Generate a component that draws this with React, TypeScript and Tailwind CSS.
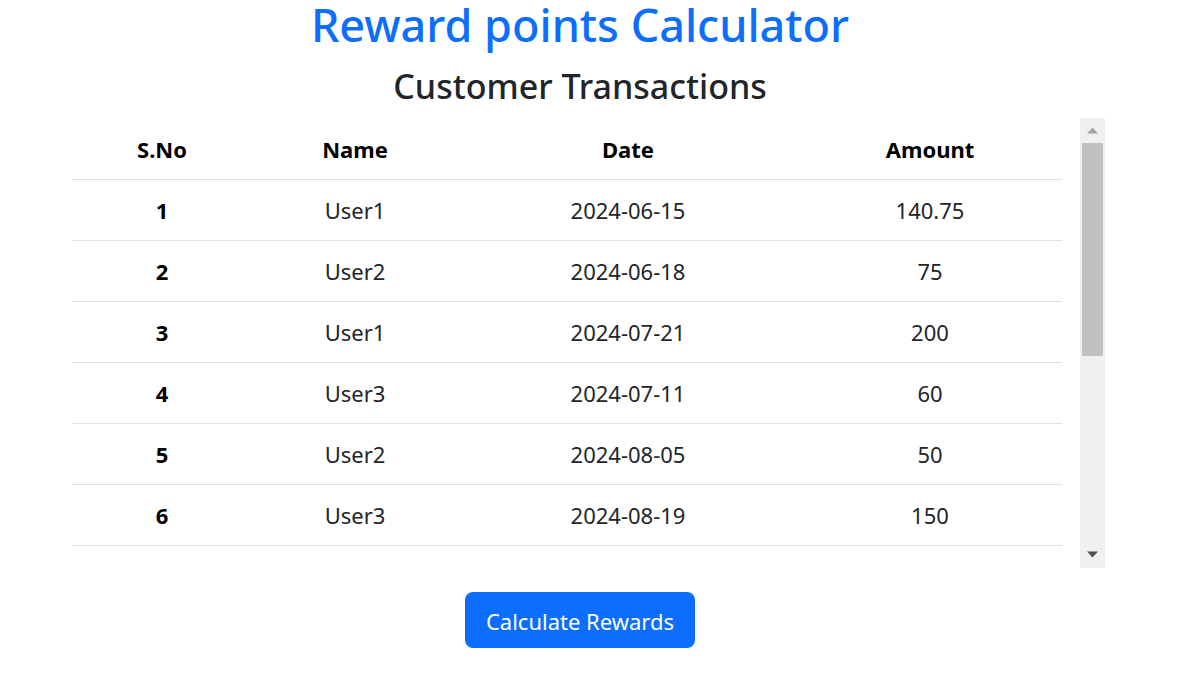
const transactions = [
  { id: 1, name: 'User1', date: '2024-06-15', amount: '140.75' },
  { id: 2, name: 'User2', date: '2024-06-18', amount: '75' },
  { id: 3, name: 'User1', date: '2024-07-21', amount: '200' },
  { id: 4, name: 'User3', date: '2024-07-11', amount: '60' },
  { id: 5, name: 'User2', date: '2024-08-05', amount: '50' },
  { id: 6, name: 'User3', date: '2024-08-19', amount: '150' },
  { id: 7, name: 'User1', date: '2024-08-25', amount: '95' },
  { id: 8, name: 'User2', date: '2024-09-02', amount: '120' },
];

const ScrollBar = () => (
  <div className="w-[25px] h-[450px] bg-[#f0f0f0] flex flex-col shrink-0">
    <div className="h-[25px] flex items-center justify-center">
      <svg width="11" height="7" viewBox="0 0 11 7">
        <polygon points="5.5,0.5 11,6.5 0,6.5" fill="#a3a3a3" />
      </svg>
    </div>
    <div className="px-[2px]">
      <div className="h-[213px] bg-[#c1c1c1]" />
    </div>
    <div className="flex-1" />
    <div className="h-[25px] flex items-center justify-center pb-[2px]">
      <svg width="11" height="7" viewBox="0 0 11 7">
        <polygon points="0,0.5 11,0.5 5.5,6.5" fill="#505050" />
      </svg>
    </div>
  </div>
);

export default function App() {
  return (
    <div className="w-[1182px] h-[689px] bg-white font-['Noto_Sans',sans-serif] text-[#212529]">
      <div className="w-[1160px] flex flex-col items-center">
        <h1 className="text-[45px] leading-[50px] font-medium text-[#0d6efd]">Reward points Calculator</h1>
        <h2 className="mt-[16px] text-[34px] leading-[40px] font-medium">Customer Transactions</h2>
      </div>

      {/* transactions list */}
      <div className="mt-[12px] pl-[72px] flex gap-[18px]">
        <div className="w-[990px] h-[450px] overflow-hidden">
          <table className="w-full border-collapse text-[22px] leading-[30px] text-center">
            <thead>
              <tr className="h-[61px] border-b border-[#dee2e6]">
                <th className="w-[180px] pt-[1px] font-bold text-black">S.No</th>
                <th className="w-[206px] pt-[1px] font-bold text-black">Name</th>
                <th className="w-[340px] pt-[1px] font-bold text-black">Date</th>
                <th className="w-[264px] pt-[1px] font-bold text-black">Amount</th>
              </tr>
            </thead>
            <tbody>
              {transactions.map(t => (
                <tr key={t.id} className="h-[61px] border-b border-[#dee2e6]">
                  <td className="pt-[1px] font-bold text-black">{t.id}</td>
                  <td className="pt-[1px]">{t.name}</td>
                  <td className="pt-[1px]">{t.date}</td>
                  <td className="pt-[1px]">{t.amount}</td>
                </tr>
              ))}
            </tbody>
          </table>
        </div>
        <ScrollBar />
      </div>

      <div className="w-[1160px] flex justify-center mt-[24px]">
        <button className="w-[230px] h-[56px] pt-[1px] rounded-[8px] bg-[#0d6efd] text-white text-[22px] leading-[30px]">
          Calculate Rewards
        </button>
      </div>
    </div>
  );
}
